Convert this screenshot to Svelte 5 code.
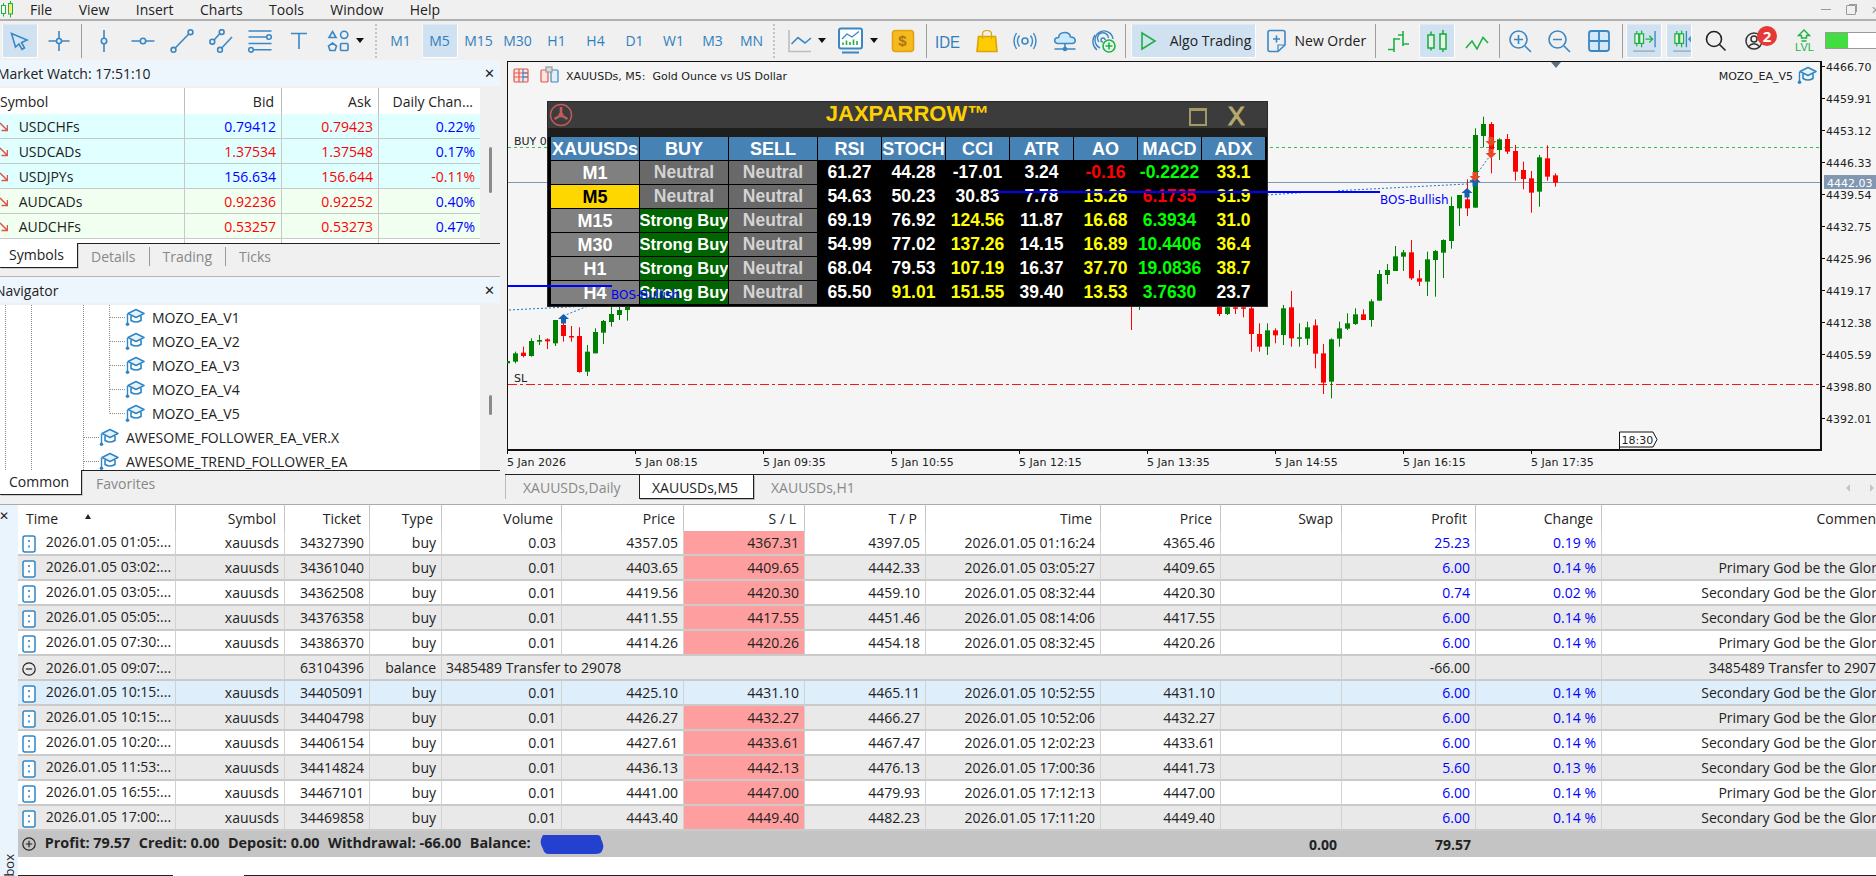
<script>
	const menu = ['File', 'View', 'Insert', 'Charts', 'Tools', 'Window', 'Help'];

	const G = 'stroke="#1fb141"';
	const toolbar = [
		{ w: 36, on: true, ml: 0, svg: '<path d="M3.5 4.5 L19 11 L13.5 13.5 L16.5 19 L14 20.5 L11 15 L7.5 18 Z" fill="#d8e6f3"/>' },
		{ w: 39, ml: 1.5, svg: '<path d="M12 2V9.5M12 14.5V22M1.5 12H9.5M14.5 12H22.5"/><circle cx="12" cy="12" r="2.5"/>' },
		{ sep: true, ml: 2.5, mr: 2.5 },
		{ w: 39, svg: '<path d="M12 1V9.3M12 14.7V23"/><circle cx="12" cy="12" r="2.7"/>' },
		{ w: 39, svg: '<path d="M0.5 12H9.3M14.7 12H23.5"/><circle cx="12" cy="12" r="2.7"/>' },
		{ w: 39, svg: '<path d="M5.2 19 L18.8 5"/><circle cx="3.5" cy="20.8" r="2.4"/><circle cx="20.5" cy="3.2" r="2.4"/>' },
		{ w: 39, svg: '<path d="M5 11 L11 4.5M12.7 19 L23 8"/><circle cx="3.3" cy="12.7" r="2.4"/><circle cx="12.7" cy="3" r="2.4"/><circle cx="11" cy="20.8" r="2.4"/>' },
		{ w: 39, svg: '<path d="M0.5 2H23.5M0.5 8H19M0.5 14.5H23.5M5.5 20.8H23.5"/><circle cx="21" cy="8" r="2.3"/><circle cx="3" cy="20.8" r="2.3"/>' },
		{ w: 39, svg: '<path d="M4 4.5H20M12 4.5V20"/>' },
		{ w: 39, svg: '<path d="M6.5 2.5 L10 8.5H3Z"/><circle cx="18.2" cy="5.8" r="3.6"/><path d="M6.5 14 L10.5 17 L9 21.5H4L2.5 17Z"/><rect x="14.5" y="14.5" width="7.5" height="7" rx="1"/>' },
		{ caret: true, ml: -1.5 },
		{ grip: true, ml: 11, mr: 4 },
		...['M1', 'M5', 'M15', 'M30', 'H1', 'H4', 'D1', 'W1', 'M3', 'MN'].map((t) => ({
			w: t === 'M5' ? 36 : 39, on: t === 'M5', ml: t === 'M5' ? 1.5 : 0, mr: t === 'M5' ? 1.5 : 0, label: t
		})),
		{ grip: true, ml: 2 },
		{ w: 24, ml: 12.5, svg: '<path d="M1 1V22.5H23" stroke="#bdbdbd"/><path d="M3.5 15 L10 8.5 L17 14 L23 9"/>' },
		{ caret: true, ml: 6.5 },
		{ w: 28, ml: 10.5, vb: '0 0 28 28', svg: '<rect x="2" y="1.5" width="23" height="20" rx="2" fill="#fff" stroke-width="2"/><path d="M5 25.5H22" stroke-width="2"/><path d="M5 12 L10 7 L15 10 L22 4.5" stroke-width="1.3"/><path d="M6 18V15.5M9.5 18V13.5M13 18V15M16.5 18V12.5M20 18V14" stroke="#1fb141" stroke-width="1.6"/>' },
		{ caret: true, ml: 5.5 },
		{ w: 24, ml: 12.5, svg: '<rect x="1.5" y="1.5" width="21" height="21" rx="3" fill="#f6b91f" stroke="#e3a214"/>', over: '$', overCls: 'dollar' },
		{ sep: true, ml: 11 },
		{ w: 30, ml: 6, label: 'IDE', cls: 'ide' },
		{ w: 24, ml: 12, svg: '<path d="M3.5 7.5H20.5L22 22.5H2Z" fill="#ffcc00" stroke="#dba309"/><path d="M7.5 10V5Q7.5 1.5 12 1.5T16.5 5V10" stroke="#dba309" stroke-width="1.2"/>' },
		{ w: 24, ml: 14.6, svg: '<circle cx="12" cy="12" r="3"/><path d="M6.5 6.5Q2.5 12 6.5 17.5M17.5 6.5Q21.5 12 17.5 17.5M3.5 4Q-1.5 12 3.5 20M20.5 4Q25.5 12 20.5 20" stroke-width="1.4"/>' },
		{ w: 24, ml: 16, svg: '<path d="M5 14.5C0.5 14.5 0.5 8.5 5.5 8.5C6.5 2 16.5 2 17.5 8C23.5 8 23.5 14.5 19 14.5Z" fill="#cde8fa"/><path d="M12 14.5V20M1.5 20H22.5"/><circle cx="12" cy="20" r="1.5" fill="#3a87c4"/>' },
		{ w: 24, ml: 15.4, svg: '<path d="M8 19A9 9 0 1 1 21 10M7 13A5.5 5.5 0 1 1 16.5 9" stroke-width="1.4"/><path d="M11 13A2 2 0 1 1 13 11M5 21A11 11 0 0 1 3 6" stroke-width="1.4"/><circle cx="17" cy="17" r="6" fill="#eaf9ee" stroke="#1fb141"/><path d="M17 13.5V20.5M13.5 17H20.5" stroke="#1fb141"/>' },
		{ sep: true, ml: 9 },
		{ w: 125, ml: 5, on: true, text: 'Algo Trading', svg: '<path d="M5 4 L18 12 L5 20Z" stroke="#1fb141"/>' },
		{ w: 24, ml: 8, svg: '<path d="M4 3.5Q4 1.5 6 1.5H19Q21 1.5 21 3.5V16L14 22.5H6Q4 22.5 4 20.5Z"/><path d="M21 16H14V22.5" stroke-width="1.2"/><path d="M12.5 6.5V13.5M9 10H16"/>' },
		{ w: 71, ml: 6, plain: 'New Order' },
		{ sep: true, ml: 10 },
		{ w: 24, ml: 10, svg: `<g ${G}><path d="M8 9V23M2 20.5H8M8 10H14M17 2V17M12 6H17M17 15H23"/></g>` },
		{ w: 36, ml: 9, on: true, svg: `<g ${G} fill="#e6f3e9"><path d="M6 2.5V21.5M18 1V23" fill="none"/><rect x="3" y="6" width="6" height="13"/><rect x="15" y="5" width="6" height="15"/></g>` },
		{ w: 24, ml: 9.5, svg: `<path ${G} d="M1 19 L7 12 L12 20 L18 8.5 L23 14"/>` },
		{ sep: true, ml: 10 },
		{ w: 24, ml: 8.5, svg: '<circle cx="10.5" cy="10.5" r="8.5"/><path d="M10.5 6V15M6 10.5H15M17 17 L23 23"/>' },
		{ w: 24, ml: 15, svg: '<circle cx="10.5" cy="10.5" r="8.5"/><path d="M6 10.5H15M17 17 L23 23"/>' },
		{ w: 24, ml: 16, svg: '<rect x="2" y="2" width="20" height="20" rx="2.5" fill="#d3e8f9" stroke-width="1.8"/><path d="M12 2V22M2 12H22" stroke-width="1.8"/>' },
		{ sep: true, ml: 11 },
		{ w: 36, ml: 3, on: true, svg: `<g transform="translate(0 -2)"><g ${G} fill="#e6f3e9" stroke-width="1.3"><path d="M5 4V20M10 3.5V21" fill="none"/><rect x="3" y="7" width="4" height="10"/><rect x="8" y="7" width="4" height="10"/><path d="M14 12.5H21M18 9 L21.5 12.5 L18 16" fill="none"/></g><path d="M24 4V21" stroke-width="1.4"/></g><path d="M1 23H24" stroke="#8f9eae" stroke-width="1.2"/>`, vb: '0 0 25 25' },
		{ w: 26, ml: 4, on: true, clip: true, svg: `<g transform="translate(0 -2)"><g ${G} fill="#e6f3e9" stroke-width="1.3"><path d="M5 4V20M10 3.5V21" fill="none"/><rect x="3" y="7" width="4" height="10"/><rect x="8" y="7" width="4" height="10"/></g><path d="M15 4V21" stroke-width="1.4"/><path d="M24 12.5H18M21 9 L17.5 12.5 L21 16" stroke-width="1.3"/></g><path d="M1 23H24" stroke="#8f9eae" stroke-width="1.2"/>`, vb: '0 0 25 25' },
		{ w: 22, ml: 13, svg: '<circle cx="10" cy="10" r="7.5" stroke="#222"/><path d="M15.5 15.5 L21.5 21.5" stroke="#222"/>' },
		{ account: true, w: 34, ml: 16.5 },
		{ lvl: true, w: 24, ml: 14.5 },
		{ level: true, ml: 8.5 }
	];

	const watch = [
		['USDCHFs', '0.79412', 'b', '0.79423', 'r', '0.22%', 'b', 'cy'],
		['USDCADs', '1.37534', 'r', '1.37548', 'r', '0.17%', 'b', 'cy'],
		['USDJPYs', '156.634', 'b', '156.644', 'r', '-0.11%', 'r', 'cy'],
		['AUDCADs', '0.92236', 'r', '0.92252', 'r', '0.40%', 'b', 'gr'],
		['AUDCHFs', '0.53257', 'r', '0.53273', 'r', '0.47%', 'b', 'gr']
	];

	const navItems = [
		['MOZO_EA_V1', 2], ['MOZO_EA_V2', 2], ['MOZO_EA_V3', 2], ['MOZO_EA_V4', 2], ['MOZO_EA_V5', 2],
		['AWESOME_FOLLOWER_EA_VER.X', 1], ['AWESOME_TREND_FOLLOWER_EA', 1]
	];

	// candles read off the chart: x-ish, colour, wick top, body top, body bottom, wick bottom
	const right = [
		[824,'r',340,346,368,380],[806,'r',256,295,350,362],[787,'g',285,292,395,440],[769,'r',333,355,398,458],
		[750,'r',305,330,357,388],[732,'r',255,273,335,362],[713,'r',222,237,275,282],[695,'g',235,238,270,300],
		[676,'r',186,192,268,340],[657,'g',170,192,228,262],[639,'g',205,225,443,443],[620,'r',358,418,445,468],
		[602,'g',405,405,445,498],[583,'g',410,438,543,566],[565,'g',538,540,578,654],[546,'g',570,573,600,710],
		[527,'g',575,598,665,708],[509,'r',630,655,665,678],[490,'r',540,577,655,660],[472,'g',570,577,590,633],
		[454,'g',558,589,633,633],[435,'g',612,630,645,672],[416,'g',630,642,722,722],[398,'g',718,724,780,800],
		[379,'r',748,763,780,780],[360,'g',745,763,792,795],[342,'g',760,790,806,810],[323,'g',785,805,836,860],
		[304,'g',835,838,965,1015],[286,'r',852,880,968,1002],[268,'r',778,796,881,925],[249,'g',785,802,836,855],
		[231,'g',790,832,836,860],[212,'r',693,742,835,860],[194,'g',735,745,825,855],[175,'r',805,811,826,850],
		[156,'g',790,811,860,885],[138,'r',790,822,860,875],[119,'r',738,745,822,875],[100,'r',738,742,745,772],
		[82,'r',738,742,745,762],[64,'g',738,742,762,765],[45,'r',738,738,762,768]
	].map(([x, c, a, b, d, e]) => ({
		x: 1555 - Math.round((1555 - (1200 + x / 2.32)) / 8) * 8, c, a: 60 + a / 3, b: 60 + b / 3, d: 60 + d / 3, e: 60 + e / 3
	}));
	const left = [
		[7,'g',183,183,190,190],[23,'g',155,160,185,190],[41,'r',140,158,168,172],[59,'g',115,123,168,170],
		[77,'g',105,120,125,135],[95,'r',115,118,124,147],[113,'g',60,60,130,138],[131,'r',50,75,108,125],
		[149,'r',78,108,112,125],[167,'r',82,108,216,218],[185,'g',135,155,215,228],[203,'g',85,96,160,160],
		[221,'g',60,63,98,132],[239,'g',20,42,66,80],[257,'g',15,30,45,60],[275,'g',0,18,30,62]
	].map(([x, c, a, b, d, e]) => ({
		x: 1555 - Math.round((1555 - (505 + x / 2.24)) / 8) * 8, c, a: 300 + a / 3, b: 300 + b / 3, d: 300 + d / 3, e: 300 + e / 3
	}));
	const candles = [...left, { x: 1131, c: 'r', a: 300, b: 300, d: 300, e: 330 }, { x: 1139, c: 'g', a: 300, b: 300, d: 300, e: 310 }, ...right];

	const prices = ['4466.70', '4459.91', '4453.12', '4446.33', '4439.54', '4432.75', '4425.96', '4419.17', '4412.38', '4405.59', '4398.80', '4392.01'];
	const dates = ['5 Jan 2026', '5 Jan 08:15', '5 Jan 09:35', '5 Jan 10:55', '5 Jan 12:15', '5 Jan 13:35', '5 Jan 14:55', '5 Jan 16:15', '5 Jan 17:35'];
	const upArrows = [[563.5, 319], [1467, 193], [1475, 182]];
	const downArrows = [[1491, 142], [1491, 154], [1475, 177]];

	const dashHead = ['XAUUSDs', 'BUY', 'SELL', 'RSI', 'STOCH', 'CCI', 'ATR', 'AO', 'MACD', 'ADX'];
	const dashRows = [
		['M1', 'n', [['61.27','w'],['44.28','w'],['-17.01','w'],['3.24','w'],['-0.16','r'],['-0.2222','l'],['33.1','y']]],
		['M5', 'n', [['54.63','w'],['50.23','w'],['30.83','w'],['7.78','w'],['15.26','y'],['6.1735','r'],['31.9','y']]],
		['M15', 's', [['69.19','w'],['76.92','w'],['124.56','y'],['11.87','w'],['16.68','y'],['6.3934','l'],['31.0','y']]],
		['M30', 's', [['54.99','w'],['77.02','w'],['137.26','y'],['14.15','w'],['16.89','y'],['10.4406','l'],['36.4','y']]],
		['H1', 's', [['68.04','w'],['79.53','w'],['107.19','y'],['16.37','w'],['37.70','y'],['19.0836','l'],['38.7','y']]],
		['H4', 's', [['65.50','w'],['91.01','y'],['151.55','y'],['39.40','w'],['13.53','y'],['3.7630','l'],['23.7','w']]]
	];

	const cols = [158, 109, 85, 72, 120, 122, 121, 121, 175, 120, 121, 134, 126, 288];
	const P = 'Primary God be the Glory';
	const S = 'Secondary God be the Glory';
	const trades = [
		['2026.01.05 01:05:...','34327390','0.03','4357.05','4367.31','4397.05','2026.01.05 01:16:24','4365.46','25.23','0.19 %',''],
		['2026.01.05 03:02:...','34361040','0.01','4403.65','4409.65','4442.33','2026.01.05 03:05:27','4409.65','6.00','0.14 %',P],
		['2026.01.05 03:05:...','34362508','0.01','4419.56','4420.30','4459.10','2026.01.05 08:32:44','4420.30','0.74','0.02 %',S],
		['2026.01.05 05:05:...','34376358','0.01','4411.55','4417.55','4451.46','2026.01.05 08:14:06','4417.55','6.00','0.14 %',S],
		['2026.01.05 07:30:...','34386370','0.01','4414.26','4420.26','4454.18','2026.01.05 08:32:45','4420.26','6.00','0.14 %',P],
		null,
		['2026.01.05 10:15:...','34405091','0.01','4425.10','4431.10','4465.11','2026.01.05 10:52:55','4431.10','6.00','0.14 %',S],
		['2026.01.05 10:15:...','34404798','0.01','4426.27','4432.27','4466.27','2026.01.05 10:52:06','4432.27','6.00','0.14 %',P],
		['2026.01.05 10:20:...','34406154','0.01','4427.61','4433.61','4467.47','2026.01.05 12:02:23','4433.61','6.00','0.14 %',S],
		['2026.01.05 11:53:...','34414824','0.01','4436.13','4442.13','4476.13','2026.01.05 17:00:36','4441.73','5.60','0.13 %',S],
		['2026.01.05 16:55:...','34467101','0.01','4441.00','4447.00','4479.93','2026.01.05 17:12:13','4447.00','6.00','0.14 %',P],
		['2026.01.05 17:00:...','34469858','0.01','4443.40','4449.40','4482.23','2026.01.05 17:11:20','4449.40','6.00','0.14 %',S]
	];
	const selected = 6;
</script>

{#snippet hat(size)}
	<svg class="hat" width={size} height={size} viewBox="0 0 20 20">
		<path d="M11 2.5 L19 6.5 L11 10.5 L3 6.5Z" fill="#e6f3fb" stroke="#2f86c6" stroke-width="1.5" stroke-linejoin="round"/>
		<path d="M6 9V13.5Q11 16.5 16 13.5V9" fill="none" stroke="#2f86c6" stroke-width="1.6"/>
		<path d="M2.5 7V16.5" stroke="#2f86c6" stroke-width="1.4"/>
		<circle cx="2.5" cy="17.2" r="1.8" fill="#2f86c6"/>
	</svg>
{/snippet}

<div class="app">
	<div class="menubar">
		<svg class="logo" width="15" height="17" viewBox="0 0 15 17">
			<path d="M3.5 2V15.5M10.5 0V16.5" stroke="#1fb141"/>
			<rect x="1.5" y="4.5" width="4" height="8" fill="#fff" stroke="#1fb141"/>
			<rect x="8.5" y="2.5" width="4" height="10.5" fill="#ffe680" stroke="#1fb141"/>
		</svg>
		<div class="menu-items">
			{#each menu as m}<span>{m}</span>{/each}
		</div>
		<div class="winctl">
			<span class="min"></span>
			<span class="restore"></span>
			<span class="x">✕</span>
		</div>
	</div>

	<div class="toolbar">
		{#each toolbar as it}
			{#if it.sep}
				<span class="sep" style="margin-left:{it.ml || 0}px;margin-right:{it.mr || 0}px"></span>
			{:else if it.grip}
				<span class="grip" style="margin-left:{it.ml || 0}px;margin-right:{it.mr || 0}px"></span>
			{:else if it.caret}
				<span class="caret" style="margin-left:{it.ml || 0}px"></span>
			{:else if it.plain}
				<span class="plain" style="width:{it.w}px;margin-left:{it.ml}px">{it.plain}</span>
			{:else if it.account}
				<span class="account" style="width:{it.w}px;margin-left:{it.ml}px">
					<svg width="20" height="20" viewBox="0 0 20 20" fill="none" stroke="#333" stroke-width="1.5">
						<circle cx="10" cy="10" r="8"/><circle cx="10" cy="8" r="3"/><path d="M4 16Q10 9.5 16 16"/>
					</svg>
					<b class="badge">2</b>
				</span>
			{:else if it.lvl}
				<span class="lvl" style="width:{it.w}px;margin-left:{it.ml}px">
					<svg width="14" height="13" viewBox="0 0 14 13" fill="none" stroke="#1fb141" stroke-width="1.4"><path d="M7 1 L12.5 6.5H9.5V9H4.5V6.5H1.5ZM4.5 12H9.5"/></svg>
					<span>LVL</span>
				</span>
			{:else if it.level}
				<span class="level" style="margin-left:{it.ml}px"><i></i></span>
			{:else}
				<span class="tb {it.cls || ''}" class:on={it.on} class:clip={it.clip} style="width:{it.w}px;margin-left:{it.ml || 0}px;margin-right:{it.mr || 0}px">
					{#if it.svg}
						<svg class="ic" width={it.vb === '0 0 28 28' ? 28 : 24} height={it.vb === '0 0 28 28' ? 28 : 24} viewBox={it.vb || '0 0 24 24'}>{@html it.svg}</svg>
					{/if}
					{#if it.over}<span class={it.overCls}>{it.over}</span>{/if}
					{#if it.label}{it.label}{/if}
					{#if it.text}<span class="tb-text">{it.text}</span>{/if}
				</span>
			{/if}
		{/each}
	</div>

	<div class="middle">
		<aside class="side">
			<section class="pane watch">
				<header class="pane-title"><span>Market Watch: 17:51:10</span><b>✕</b></header>
				<div class="watch-body">
					<table class="watch-table">
						<colgroup><col class="c-sym"/><col class="c-num"/><col class="c-num"/><col class="c-chg"/></colgroup>
						<thead>
							<tr><th class="l">Symbol</th><th>Bid</th><th>Ask</th><th>Daily Chan...</th></tr>
						</thead>
						<tbody>
							{#each watch as r}
								<tr class={r[7]}>
									<td class="sym">
										<svg width="8" height="10" viewBox="0 0 8 10" fill="none" stroke="#e0524a" stroke-width="1.5"><path d="M0 1 L7 8M1.5 8.5H7.5V3"/></svg>
										{r[0]}
									</td>
									<td class={r[2]}>{r[1]}</td>
									<td class={r[4]}>{r[3]}</td>
									<td class={r[6]}>{r[5]}</td>
								</tr>
							{/each}
							<tr class="stub"><td></td><td></td><td></td><td></td></tr>
						</tbody>
					</table>
					<span class="vbar watch-bar"></span>
				</div>
				<nav class="tabs">
					<span class="tab active">Symbols</span>
					<span class="tab">Details</span><i></i>
					<span class="tab">Trading</span><i></i>
					<span class="tab">Ticks</span>
				</nav>
			</section>

			<section class="pane nav">
				<header class="pane-title"><span>Navigator</span><b>✕</b></header>
				<div class="tree-wrap">
					<div class="tree">
						<svg class="guides" width="130" height="165" fill="none" stroke="#8a8a8a" stroke-dasharray="1 1">
							<path d="M5.5 0V165M31.5 0V165M83.5 0V165M109.5 0V108.5"/>
						</svg>
						{#each navItems as [name, depth]}
							<div class="node" class:deep={depth === 2}>
								<span class="conn"></span>
								{@render hat(20)}
								<span class="nm">{name}</span>
							</div>
						{/each}
					</div>
					<span class="vbar nav-bar"></span>
				</div>
				<nav class="tabs">
					<span class="tab active common">Common</span>
					<span class="tab fav">Favorites</span>
				</nav>
			</section>
		</aside>

		<main class="chart-col">
			<div class="chart">
				<svg class="chart-svg" width="1369" height="413" viewBox="507 61 1369 413" font-family="'DejaVu Sans', sans-serif" font-size="11">
					<rect x="507" y="61" width="1314" height="389" fill="#f5f5f5" stroke="#111" stroke-width="2"/>
					<path d="M1551 62H1561L1556 68Z" fill="#5f7080"/>

					<!-- chart header -->
					<g fill="none" stroke-width="1.2">
						<rect x="514" y="69" width="14" height="13" rx="1" stroke="#e2574c" fill="#fbe5e2"/>
						<path d="M514 73H528M514 77H528M519 69V82" stroke="#e2574c"/>
						<path d="M523 69V82M523 73H528M523 77H528" stroke="#3a87c4"/>
						<rect x="541" y="70" width="7" height="12" rx="1" stroke="#e2574c" fill="#fbe5e2"/>
						<rect x="551" y="70" width="7" height="12" rx="1" stroke="#3a87c4" fill="#e1f0fa"/>
						<rect x="546" y="67" width="6" height="5" fill="#ddd" stroke="#999"/>
					</g>
					<text x="566" y="80" fill="#222" xml:space="preserve">XAUUSDs, M5:  Gold Ounce vs US Dollar</text>
					<text x="1793" y="80" fill="#222" text-anchor="end">MOZO_EA_V5</text>

					<!-- levels -->
					<text x="514" y="145" fill="#222">BUY 0.01</text>
					<line x1="508" x2="1820" y1="147.5" y2="147.5" stroke="#2ec44a" stroke-dasharray="3 3"/>
					<line x1="508" x2="1820" y1="182.5" y2="182.5" stroke="#8398b2" stroke-width="1.2"/>
					<text x="514" y="382" fill="#222">SL</text>
					<line x1="508" x2="1820" y1="384.5" y2="384.5" stroke="#f01818" stroke-width="1.2" stroke-dasharray="9 3 3 3"/>

					<!-- candles -->
					{#each candles as k}
						<line x1={k.x + 0.5} x2={k.x + 0.5} y1={k.a} y2={k.e} stroke={k.c === 'g' ? '#008000' : '#ff0000'}/>
						<rect x={k.x - 2} y={k.b} width="5" height={Math.max(k.d - k.b, 1.5)} fill={k.c === 'g' ? '#008000' : '#ff0000'}/>
					{/each}

					<!-- dotted structure lines -->
					<g fill="none" stroke="#1e78c8" stroke-dasharray="2 2">
						<path d="M509 310 L588 306M563 316 L588 306"/>
						<path d="M1267 195 L1301 192.7M1338 190.7 L1467 184M1467 184 L1476 175 L1492 153"/>
					</g>
					{#each upArrows as [x, y]}
						<path d="M{x - 5.5} {y} L{x} {y - 5} L{x + 5.5} {y}H{x + 2.5}V{y + 4.5}H{x - 2.5}V{y}Z" fill="#1560b0"/>
					{/each}
					{#each downArrows as [x, y]}
						<path d="M{x - 5.5} {y - 1} L{x} {y + 4.5} L{x + 5.5} {y - 1}H{x + 2.5}V{y - 5}H{x - 2.5}V{y - 1}Z" fill="#e8482a"/>
					{/each}

					<!-- axes -->
					{#each prices as p, i}
						<line x1="1821" x2="1825" y1={66.5 + i * 32} y2={66.5 + i * 32} stroke="#111"/>
						<text x="1826" y={71 + i * 32} fill="#222">{p}</text>
					{/each}
					<rect x="1824" y="175" width="52" height="14" fill="#8297b1"/>
					<text x="1827" y="186.5" fill="#fff">4442.03</text>
					{#each dates as d, i}
						<line x1={507.5 + i * 128} x2={507.5 + i * 128} y1="450" y2="454" stroke="#111"/>
						<text x={507 + i * 128} y="466" fill="#222">{d}</text>
					{/each}
					<path d="M1619.5 450V432H1653L1657 439.5L1653 447H1619.5" fill="#fff" stroke="#111"/>
					<text x="1621.5" y="444" fill="#222">18:30</text>
				</svg>

				<div class="ea-hat">{@render hat(20)}</div>

				<div class="dash">
					<div class="dash-title">
						<svg class="dash-logo" width="24" height="24" viewBox="0 0 24 24" fill="none" stroke="#c25a5a" stroke-width="1.4">
							<circle cx="12" cy="12" r="10.5"/>
							<circle cx="12" cy="12" r="1.8" fill="#c25a5a"/>
							<path d="M12 4V10M5.5 16 L10.5 13M18.5 16 L13.5 13" stroke-width="2.6"/>
						</svg>
						<span class="brand">JAXPARROW™</span>
						<span class="maxbox"></span>
						<span class="closex">X</span>
					</div>
					<div class="dash-gap"></div>
					<div class="dash-grid">
						{#each dashHead as h}<div class="dc head">{h}</div>{/each}
						{#each dashRows as [tf, buy, vals]}
							<div class="dc tf" class:current={tf === 'M5'}>{tf}</div>
							{#if buy === 's'}
								<div class="dc strong">Strong Buy</div>
							{:else}
								<div class="dc neutral">Neutral</div>
							{/if}
							<div class="dc neutral">Neutral</div>
							{#each vals as [v, c]}<div class="dc val {c}">{v}</div>{/each}
						{/each}
					</div>
				</div>

				<svg class="chart-top" width="1369" height="413" viewBox="507 61 1369 413" font-family="'DejaVu Sans', sans-serif" font-size="12">
					<rect x="996" y="191" width="384" height="2" fill="#0000ff"/>
					<rect x="508" y="285" width="104" height="2" fill="#0000ff"/>
					<text x="1380" y="204" fill="#0000ff">BOS-Bullish</text>
					<text x="611" y="299" fill="#0000ff">BOS-Bullish</text>
				</svg>
			</div>
			<div class="chart-tabs">
				<span class="ctab">XAUUSDs,Daily</span>
				<span class="ctab active">XAUUSDs,M5</span>
				<span class="ctab">XAUUSDs,H1</span>
				<span class="scrollers"><i class="ar-l"></i><i class="ar-r"></i></span>
			</div>
		</main>
	</div>

	<div class="bottom">
		<div class="strip">
			<span class="strip-x">✕</span>
			<span class="strip-label">Toolbox</span>
		</div>
		<div class="history">
			<table class="trades">
				<colgroup>{#each cols as c}<col style="width:{c}px"/>{/each}</colgroup>
				<thead>
					<tr>
						<th class="l time-h">Time<i class="sort"></i></th>
						<th>Symbol</th><th>Ticket</th><th>Type</th><th>Volume</th><th>Price</th><th>S / L</th><th>T / P</th>
						<th>Time</th><th>Price</th><th>Swap</th><th>Profit</th><th>Change</th><th>Comment</th>
					</tr>
				</thead>
				<tbody>
					{#each trades as t, i}
						{#if t === null}
							<tr class="alt">
								<td class="open">
									<svg width="14" height="14" viewBox="0 0 14 14" fill="none" stroke="#222" stroke-width="1.2"><circle cx="7" cy="7" r="6.2"/><path d="M3.8 7H10.2"/></svg>
									2026.01.05 09:07:...
								</td>
								<td></td><td>63104396</td><td>balance</td>
								<td colspan="7" class="l note">3485489 Transfer to 29078</td>
								<td>-66.00</td><td></td><td>3485489 Transfer to 29078</td>
							</tr>
						{:else}
							<tr class:alt={i % 2 === 1} class:sel={i === selected}>
								<td class="open">
									<svg width="14" height="18" viewBox="0 0 14 18" fill="#fff" stroke="#2f86c6" stroke-width="1.5"><rect x="1" y="1" width="12" height="16" rx="2"/><path d="M7 5V7M7 10.5V12.5" stroke-width="1.6"/></svg>
									{t[0]}
								</td>
								<td>xauusds</td><td>{t[1]}</td><td>buy</td><td>{t[2]}</td><td>{t[3]}</td>
								<td class:stop={i !== selected}>{t[4]}</td>
								<td>{t[5]}</td><td>{t[6]}</td><td>{t[7]}</td><td></td>
								<td class="b">{t[8]}</td><td class="b">{t[9]}</td><td>{t[10]}</td>
							</tr>
						{/if}
					{/each}
				</tbody>
				<tfoot>
					<tr>
						<td colspan="10" class="l summary">
							<svg width="14" height="14" viewBox="0 0 14 14" fill="none" stroke="#222" stroke-width="1.2"><circle cx="7" cy="7" r="6.2"/><path d="M3.8 7H10.2M7 3.8V10.2"/></svg>
							<span>Profit: 79.57</span><span>Credit: 0.00</span><span>Deposit: 0.00</span><span>Withdrawal: -66.00</span><span>Balance:</span>
							<svg class="scribble" width="66" height="21" viewBox="0 0 66 21"><path d="M4 1H58Q62 1 62 5Q66 12 63 17Q62 20 56 20H10Q5 20 4 15Q0 8 3 3Z" fill="#2440cf"/></svg>
						</td>
						<td>0.00</td><td>79.57</td><td colspan="2"></td>
					</tr>
				</tfoot>
			</table>
			<div class="tail"><span class="t1"></span><span class="t2"></span></div>
		</div>
	</div>
</div>

<style>
	:global(body) {
		margin: 0;
		background: #f0f0f0;
		font-family: 'Open Sans', 'Noto Sans', sans-serif;
	}

	.app {
		width: 1876px;
		height: 876px;
		overflow: hidden;
		display: flex;
		flex-direction: column;
		font-size: 14px;
		color: #222;
	}

	/* menu */
	.menubar {
		height: 19px;
		display: flex;
		align-items: center;
		border-bottom: 2px solid #b0b0b0;
		box-sizing: content-box;
		flex: none;
	}
	.logo { width: 15px; margin-right: 15px; flex: none; }
	.menu-items { display: flex; gap: 26.5px; margin-top: -1px; }
	.winctl { margin-left: auto; display: flex; align-items: center; gap: 15px; height: 14px; }
	.min { width: 10px; height: 1px; background: #9a9a9a; }
	.restore { width: 8px; height: 8px; border: 1px solid #9a9a9a; border-radius: 1px; box-shadow: 2px -2px 0 -1px #9a9a9a; }
	.x { color: #9a9a9a; font-size: 11px; width: 5px; overflow: hidden; }

	/* toolbar */
	.toolbar {
		height: 39px;
		padding-left: 2px;
		display: flex;
		align-items: center;
		flex: none;
		background: #f0f0f0;
		color: #2f7fbe;
		overflow: hidden;
	}
	.tb {
		height: 34px;
		flex: none;
		display: flex;
		align-items: center;
		justify-content: center;
		position: relative;
		box-sizing: border-box;
		font-size: 14px;
	}
	.tb.on {
		background: #d0e1f1;
		border: 1px solid #dfe8f0;
		border-left-color: #fafafa;
		border-bottom-color: #fff;
		border-right-color: #fff;
	}
	.tb.clip { justify-content: flex-start; overflow: hidden; padding-left: 5px; }
	.ic { fill: none; stroke: #3a87c4; stroke-width: 1.6; flex: none; }
	.tb-text { color: #222; margin-left: 9px; }
	.ide { font-family: 'Liberation Sans', sans-serif; transform: scaleY(1.1); font-size: 15px; }
	.dollar { position: absolute; color: #a9760f; font-weight: 700; font-size: 15px; font-family: 'Liberation Sans', sans-serif; }
	.sep { width: 1px; height: 34px; background: #9d9d9d; flex: none; }
	.grip { width: 0; height: 34px; border-left: 2px dotted #c4c4c4; flex: none; }
	.caret {
		width: 0;
		height: 0;
		border-left: 4.5px solid transparent;
		border-right: 4.5px solid transparent;
		border-top: 5px solid #111;
		flex: none;
	}
	.plain { color: #222; flex: none; white-space: nowrap; }
	.account { position: relative; flex: none; height: 30px; display: flex; align-items: center; }
	.badge {
		position: absolute;
		left: 13px;
		top: 0;
		width: 20px;
		height: 20px;
		border-radius: 50%;
		background: #e53935;
		color: #fff;
		font: 700 15px/20px 'Open Sans', sans-serif;
		text-align: center;
	}
	.lvl {
		flex: none;
		display: flex;
		flex-direction: column;
		align-items: center;
		color: #1fb141;
		font: 400 11px/11px 'Liberation Sans', sans-serif;
	}
	.level {
		width: 60px;
		height: 17px;
		flex: none;
		background: #fff;
		border: 1px solid #9a9a9a;
		box-sizing: border-box;
	}
	.level i { display: block; width: 22px; height: 100%; background: #41dd41; }

	/* layout */
	.middle { display: flex; height: 444px; flex: none; }
	.side { width: 500px; flex: none; background: #f0f0f0; display: flex; flex-direction: column; }
	.pane { display: flex; flex-direction: column; }
	.watch { height: 216px; border-bottom: 1px solid #b5b5b5; box-sizing: content-box; }
	.nav { flex: 1; }
	.pane-title {
		height: 26px;
		flex: none;
		background: #eef6fd;
		display: flex;
		align-items: center;
		justify-content: space-between;
		padding-right: 5px;
	}
	.pane-title span { margin-left: -3px; }
	.pane-title b { font-size: 13px; font-weight: 700; color: #222; font-family: 'DejaVu Sans', sans-serif; }
	.nav .pane-title span { margin-left: -5px; }

	.watch-body { height: 155px; margin-top: 2px; flex: none; position: relative; overflow: hidden; }
	.watch-table { width: 480px; table-layout: fixed; border-collapse: separate; border-spacing: 0; background: #fff; }
	.c-sym { width: 185px; }
	.c-num { width: 97px; }
	.c-chg { width: 101px; }
	.watch-table th {
		height: 26px;
		padding: 0 7px 0 0;
		font-weight: 400;
		text-align: right;
		color: #222;
		border-right: 1px solid #bdbdbd;
		box-sizing: border-box;
		white-space: nowrap;
	}
	.watch-table th:last-child { border-right: none; }
	.watch-table th.l { text-align: left; padding-left: 0; }
	.watch-table td {
		height: 25px;
		padding: 0 5px 0 0;
		text-align: right;
		box-sizing: border-box;
		border-bottom: 1px solid #c8c8c8;
		border-right: 1px solid #c8c8c8;
		white-space: nowrap;
	}
	.watch-table td:last-child { border-right: none; }
	.watch-table td.sym { text-align: left; color: #222; padding-left: 0; }
	.sym svg { margin-right: 7px; }
	.cy td { background: #e0ffff; }
	.gr td { background: #f0fff0; }
	.stub td { height: 10px; background: #fff; }
	.b { color: #0000ff; }
	.r { color: #ff0000; }
	.vbar { position: absolute; width: 3px; background: #8a8a8a; border-radius: 2px; left: 489px; }
	.watch-bar { top: 59px; height: 46px; }
	.nav-bar { top: 90px; height: 20px; }

	.tabs {
		height: 26px;
		flex: none;
		display: flex;
		align-items: center;
		border-top: 1px solid #222;
		box-sizing: border-box;
		color: #888;
	}
	.tabs i { width: 1px; height: 19px; background: #999; }
	.tab { padding: 0 13px; }
	.tab.active {
		background: #fff;
		color: #222;
		width: 78px;
		height: 25px;
		box-sizing: border-box;
		padding: 0 0 0 9px;
		line-height: 24px;
		border-right: 1px solid #222;
		border-bottom: 1px solid #222;
		box-shadow: 1px 1px 0 #ccc;
		align-self: flex-start;
		margin-top: -1px;
	}
	.tab.common { width: 82px; }
	.fav { padding-left: 14px; }

	.tree-wrap { height: 165px; flex: none; margin-top: 2px; position: relative; overflow: hidden; }
	.tree { width: 480px; height: 165px; background: #fff; position: relative; overflow: hidden; }
	.guides { position: absolute; left: 0; top: 0; }
	.node { height: 24px; display: flex; align-items: center; padding-left: 84px; position: relative; white-space: nowrap; }
	.node.deep { padding-left: 110px; }
	.conn { width: 15px; border-top: 1px dotted #8a8a8a; flex: none; }
	.hat { flex: none; }
	.nm { margin-left: 7px; }

	/* chart */
	.chart-col { flex: 1; display: flex; flex-direction: column; min-width: 0; padding-left: 7px; padding-top: 1px; box-sizing: border-box; }
	.chart { height: 413px; flex: none; position: relative; background: #f5f5f5; }
	.chart-svg, .chart-top { position: absolute; left: 0; top: 0; display: block; }
	.chart-top { pointer-events: none; }
	.ea-hat { position: absolute; left: 1290px; top: 4px; }

	.dash {
		position: absolute;
		left: 41px;
		top: 41px;
		width: 719px;
		height: 204px;
		background: #000;
		box-shadow: 0 0 0 1px #2a2a2a;
		font-family: 'Liberation Sans', sans-serif;
		font-weight: 700;
	}
	.dash-title {
		height: 26px;
		background: #3c3c3c;
		display: flex;
		align-items: center;
		position: relative;
		justify-content: center;
	}
	.dash-logo { position: absolute; left: 1px; top: 1px; }
	.brand { color: #ffd000; font-size: 22px; line-height: 26px; margin-top: -2px; }
	.maxbox {
		position: absolute;
		left: 641px;
		top: 6px;
		width: 14px;
		height: 13px;
		border: 2.5px solid #a39a63;
		border-top-width: 3px;
	}
	.closex {
		position: absolute;
		left: 680px;
		top: 1px;
		color: #b5ab6e;
		font-size: 25px;
		line-height: 26px;
		font-weight: 400;
		-webkit-text-stroke: 1px #b5ab6e;
	}
	.dash-gap { height: 9px; background: #1e1e1e; }
	.dash-grid {
		display: grid;
		grid-template-columns: 89px 89px 89px repeat(7, 64px);
		grid-auto-rows: 24px;
		padding-left: 3px;
		background: #000;
	}
	.dc {
		display: flex;
		align-items: center;
		justify-content: center;
		border-right: 1px solid #000;
		border-bottom: 1px solid #000;
		box-sizing: border-box;
		font-size: 17.5px;
		line-height: 1;
		white-space: nowrap;
		overflow: hidden;
	}
	.head { background: #4682b4; color: #fff; font-size: 18px; }
	.tf { background: #808080; color: #fff; font-size: 18px; }
	.tf.current { background: #ffd700; color: #000; }
	.neutral { background: #696969; color: #d3d3d3; }
	.strong { background: #006400; color: #fff; font-size: 16.5px; }
	.val.w { color: #fff; }
	.val.y { color: #ffff00; }
	.val.l { color: #00ff00; }
	.val.r { color: #ff0000; }

	.chart-tabs {
		height: 30px;
		flex: none;
		display: flex;
		align-items: flex-start;
		border-top: 1px solid #222;
		margin-left: -2px;
		box-sizing: border-box;
		color: #888;
		position: relative;
		background: #f0f0f0;
	}
	.ctab {
		height: 24px;
		line-height: 25px;
		box-sizing: border-box;
		padding: 0 0 0 17px;
		width: 134px;
		white-space: nowrap;
	}
	.ctab:first-child { border-left: 1px solid #bbb; }
	.ctab.active {
		width: 115px;
		padding-left: 12px;
		background: #fff;
		color: #222;
		border-left: 1px solid #222;
		border-right: 1px solid #222;
		border-bottom: 1px solid #222;
		box-shadow: 1px 1px 0 #bbb;
	}
	.ctab:last-of-type { padding-left: 16px; }
	.scrollers { position: absolute; right: 2px; top: 9px; display: flex; gap: 20px; }
	.ar-l, .ar-r { width: 0; height: 0; border-top: 4px solid transparent; border-bottom: 4px solid transparent; }
	.ar-l { border-right: 4px solid #c5c5c5; }
	.ar-r { border-left: 4px solid #c5c5c5; }

	/* history */
	.bottom { flex: 1; display: flex; min-height: 0; background: #fff; }
	.strip {
		width: 18px;
		flex: none;
		background: #eaf4fc;
		display: flex;
		flex-direction: column;
		overflow: hidden;
		border-top: 1px solid #aaa;
		box-sizing: border-box;
	}
	.strip-x { font: 700 12px/1 'DejaVu Sans', sans-serif; margin: 5px 0 0 -1px; color: #222; }
	.strip-label {
		margin-top: auto;
		margin-bottom: -27px;
		writing-mode: vertical-rl;
		transform: rotate(180deg);
		font-size: 13px;
		line-height: 18px;
		color: #222;
	}
	.history { flex: 1; min-width: 0; display: flex; flex-direction: column; overflow: hidden; }
	.trades {
		table-layout: fixed;
		width: 1872px;
		border-collapse: separate;
		border-spacing: 0;
		flex: none;
	}
	.trades th {
		height: 27px;
		font-weight: 400;
		text-align: right;
		padding: 0 8px 0 0;
		border-top: 1px solid #aaa;
		border-right: 1px solid #c4c4c4;
		box-sizing: border-box;
		background: #fff;
		white-space: nowrap;
	}
	.trades th.l { text-align: left; padding-left: 8px; position: relative; }
	.sort {
		position: absolute;
		left: 67px;
		top: 9px;
		border-left: 3.5px solid transparent;
		border-right: 3.5px solid transparent;
		border-bottom: 5px solid #222;
	}
	.trades td {
		height: 25px;
		padding: 0 5px 0 0;
		text-align: right;
		box-sizing: border-box;
		border-right: 1px solid #d2d2d2;
		border-bottom: 2px solid #cacaca;
		white-space: nowrap;
		background: #fff;
	}
	.trades td.open {
		text-align: left;
		padding: 0 0 0 4px;
		overflow: hidden;
	}
	.open svg { vertical-align: middle; margin-right: 6px; }
	.trades .alt td { background: #e9e9e9; }
	.trades .sel td { background: #deeefb; }
	.trades td.stop { background: #ff9e9e; }
	.trades .b { color: #0000ff; }
	.trades td.note { text-align: left; padding-left: 4px; }
	.trades tfoot td {
		height: 26px;
		background: #c4c4c4;
		border: none;
		font-weight: 700;
	}
	.trades td.summary { text-align: left; padding-left: 4px; font-size: 14.4px; }
	.summary svg { vertical-align: middle; margin-right: 5px; }
	.summary span { margin-right: 8.5px; }
	.summary .scribble { margin: 0 0 0 -4px; vertical-align: middle; }
	.tail { margin-top: auto; height: 1px; display: flex; flex: none; }
	.t1 { width: 155px; background: #222; }
	.t2 { flex: 1; margin-left: 71px; background: #222; }
</style>
